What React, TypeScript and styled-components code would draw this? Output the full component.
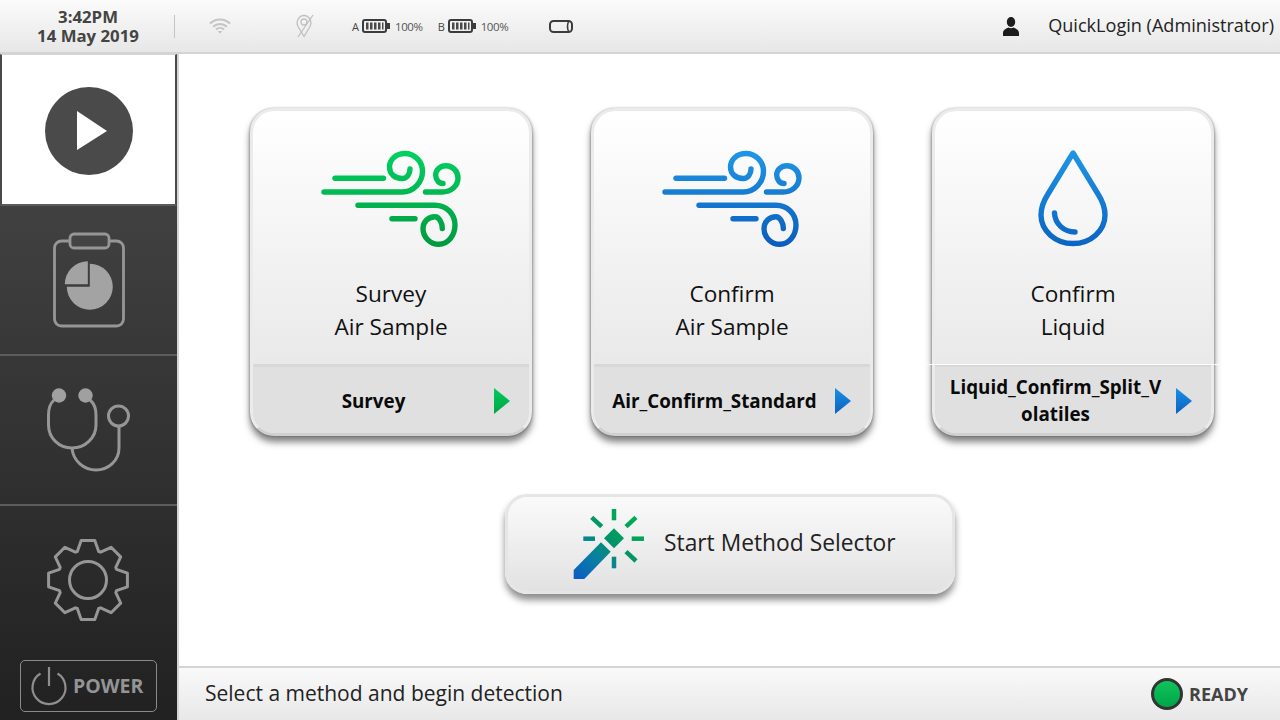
import { useMemo } from "react";
import styled, { createGlobalStyle } from "styled-components";

const GlobalStyle = createGlobalStyle`
  html, body {
    margin: 0;
    padding: 0;
    background: #ffffff;
    font-family: "Open Sans", "Noto Sans", sans-serif;
  }
  * {
    box-sizing: border-box;
  }
`;

const METHODS = [
  { id: "survey", line1: "Survey", line2: "Air Sample", method: "Survey", kind: "green" },
  { id: "confirm", line1: "Confirm", line2: "Air Sample", method: "Air_Confirm_Standard", kind: "blue" },
  { id: "liquid", line1: "Confirm", line2: "Liquid", method: "Liquid_Confirm_Split_Volatiles", kind: "drop" },
];

const WindIcon = ({ id, from, to }: { id: string; from: string; to: string }) => (
  <svg width="142" height="97" viewBox="1 0 142 97" fill="none">
    <defs>
      <linearGradient id={id} gradientUnits="userSpaceOnUse" x1="0" y1="0" x2="0" y2="97">
        <stop offset="0" stopColor={from} />
        <stop offset="1" stopColor={to} />
      </linearGradient>
    </defs>
    <g stroke={`url(#${id})`} strokeWidth="5.4" strokeLinecap="round" strokeLinejoin="round">
      <path d="M16 28.300H64.500" />
      <path d="M5 42H83C95 42 103.500 32 103.500 21C103.500 11 95 3.500 86 3.500C77 3.500 70.500 9.500 70.500 17C70.500 24 76 28.500 83 28.500C88 28.500 91 24 91 19" />
      <path d="M106.500 42H123C132 42 139 36 139 28C139 21 133.500 15.700 127 15.700C121 15.700 116.700 20 116.700 25C116.700 30 120 33.500 124 33.500" />
      <path d="M39 55.300H116C127.500 55.300 136 64 136 75C136 86 128.500 94.300 120 94.300C111 94.300 104 87 104 78.500C104 71.500 109.500 66.700 116 66.700C120 66.700 123.500 73 123.300 78.500" />
      <path d="M73 68.700H96" />
    </g>
  </svg>
);

const DropIcon = () => (
  <svg width="76" height="101" viewBox="0 0 76 101" fill="none">
    <defs>
      <linearGradient id="dropGrad" gradientUnits="userSpaceOnUse" x1="0" y1="0" x2="0" y2="101">
        <stop offset="0" stopColor="#1f97e6" />
        <stop offset="1" stopColor="#0a62c2" />
      </linearGradient>
    </defs>
    <g stroke="url(#dropGrad)" strokeWidth="5.4" strokeLinecap="round" strokeLinejoin="round">
      <path d="M38 5L13 46Q6 57 6 67A32 28.500 0 0 0 70 67Q70 57 63 46Z" />
      <path d="M19.500 65C20 76 29 84 40 84" />
    </g>
  </svg>
);

const WandIcon = () => (
  <svg width="74" height="74" viewBox="0 0 74 74" fill="none">
    <defs>
      <linearGradient id="wandGrad" gradientUnits="userSpaceOnUse" x1="70" y1="4" x2="4" y2="74">
        <stop offset="0" stopColor="#00b548" />
        <stop offset="0.45" stopColor="#009468" />
        <stop offset="0.68" stopColor="#0a80a0" />
        <stop offset="1" stopColor="#0a5ac8" />
      </linearGradient>
    </defs>
    <path d="M31 37.300L40.700 46.700L14.300 74H3.700V65Z" fill="url(#wandGrad)" />
    <path d="M44 23.300L54 33.300L44 43.300L34 33.300Z" fill="url(#wandGrad)" />
    <g stroke="url(#wandGrad)" strokeWidth="4.500">
      <path d="M44 4V15.300" />
      <path d="M61.700 33.700H74" />
      <path d="M13.300 33.700H25" />
      <path d="M44 51.700V63.300" />
      <path d="M21.700 12.300L31.700 21.700" />
      <path d="M56 21.700L66 12.300" />
      <path d="M56 46.700L66 56" />
    </g>
  </svg>
);

const PlayIcon = () => (
  <svg width="90" height="90" viewBox="0 0 90 90">
    <circle cx="45" cy="45" r="44" fill="#4a4a4a" />
    <path d="M33 25V64L63 45Z" fill="#ffffff" />
  </svg>
);

const ClipboardIcon = () => (
  <svg width="74" height="96" viewBox="0 0 74 96" fill="none">
    <rect x="2.500" y="9" width="69" height="85" rx="7" stroke="#969696" strokeWidth="2.800" />
    <rect x="18" y="2" width="39" height="14" rx="4" fill="#444444" stroke="#969696" strokeWidth="2.800" />
    <path d="M37.800 31.700A23 23 0 1 1 14.800 54.700H37.800Z" fill="#a3a3a3" />
    <path d="M35.800 29.300A23 23 0 0 0 12.800 52.300H35.800Z" fill="#a3a3a3" />
  </svg>
);

const StethoscopeIcon = () => (
  <svg width="90" height="92" viewBox="0 0 90 92" fill="none">
    <g stroke="#969696" strokeWidth="3">
      <path d="M10 12Q4.500 17 4.500 27V37C4.500 50 15 60 28 60C41 60 52 50 52 37V27Q52 17 46 12" />
      <path d="M28 60C29 73 40 82 52 82C64 82 75 73 75 60V38" />
      <circle cx="74.500" cy="28" r="10" />
    </g>
    <circle cx="15" cy="7.500" r="7.200" fill="#a0a0a0" />
    <circle cx="41.500" cy="7.500" r="7.200" fill="#a0a0a0" />
  </svg>
);

const GearIcon = () => {
  const outline = useMemo(() => {
    const points: string[] = [];
    const teeth = 8;
    for (let i = 0; i < teeth; i++) {
      const mid = (i * 2 * Math.PI) / teeth - Math.PI / 2;
      const spots: [number, number][] = [
        [30.5, mid - 0.36],
        [40, mid - 0.17],
        [40, mid + 0.17],
        [30.5, mid + 0.36],
      ];
      spots.forEach(([r, a]) => {
        points.push(`${(43 + r * Math.cos(a)).toFixed(1)},${(43 + r * Math.sin(a)).toFixed(1)}`);
      });
    }
    return points.join(" ");
  }, []);
  return (
    <svg width="86" height="86" viewBox="0 0 86 86" fill="none">
      <polygon points={outline} stroke="#969696" strokeWidth="3" strokeLinejoin="round" />
      <circle cx="43" cy="43" r="18.500" stroke="#969696" strokeWidth="3" />
    </svg>
  );
};

const PowerIcon = () => (
  <svg width="38" height="40" viewBox="0 0 38 40" fill="none" stroke="#8e8e8e" strokeWidth="2.200">
    <path d="M19 1V20" />
    <path d="M10.500 7.500A16.500 16.500 0 1 0 27.500 7.500" />
  </svg>
);

const WifiIcon = () => (
  <svg width="22" height="16" viewBox="0 0 22 16" fill="none" stroke="#c4c4c4" strokeWidth="2">
    <path d="M1 5.500C6.500 0 15.500 0 21 5.500" />
    <path d="M4 8.700C8 5 14 5 18 8.700" />
    <path d="M7 11.500C9.300 9.500 12.700 9.500 15 11.500" />
    <path d="M8.700 13H13.300L11 15.800Z" fill="#c4c4c4" stroke="none" />
  </svg>
);

const PinIcon = () => (
  <svg width="18" height="24" viewBox="0 0 18 24" fill="none" stroke="#c0c0c0" strokeWidth="1.300">
    <path d="M8 22.500L2 12.500C-0.500 7.500 3 1.500 8 1.500C13 1.500 16.500 7.500 14 12.500Z" />
    <circle cx="8" cy="8" r="3" />
    <path d="M2 23L17 1" />
  </svg>
);

const BatteryIcon = () => (
  <svg width="28" height="14" viewBox="0 0 28 14">
    <rect x="1" y="1" width="23" height="12" rx="2" fill="none" stroke="#3c3c3c" strokeWidth="2" />
    <rect x="25" y="4" width="3" height="6" fill="#3c3c3c" />
    {[4, 8, 12, 16].map((x) => (
      <rect key={x} x={x} y="3.500" width="2.500" height="7" fill="#4a4a4a" />
    ))}
    <rect x="20" y="3.500" width="1.500" height="7" fill="#4a4a4a" />
  </svg>
);

const PillIcon = () => (
  <svg width="24" height="13" viewBox="0 0 24 13" fill="none" stroke="#3c3c3c">
    <rect x="1" y="1" width="22" height="11" rx="3.500" strokeWidth="2" />
    <path d="M19.500 1.500Q17.500 6.500 19.500 11.500" strokeWidth="1.500" />
  </svg>
);

const UserIcon = () => (
  <svg width="16" height="19" viewBox="0 0 16 19" fill="#1c1c1c">
    <ellipse cx="8" cy="5" rx="4.200" ry="5" />
    <path d="M0 19V16C0 13 3 11.500 5.500 10.500C7 11.500 9 11.500 10.500 10.500C13 11.500 16 13 16 16V19Z" />
  </svg>
);

const App = () => {
  return (
    <Screen>
      <GlobalStyle />
      <TopBar>
        <Clock>
          <span>3:42PM</span>
          <span>14 May 2019</span>
        </Clock>
        <TopDivider />
        <WifiSlot>
          <WifiIcon />
        </WifiSlot>
        <PinSlot>
          <PinIcon />
        </PinSlot>
        <BatteryGroup>
          <BatteryLetter>A</BatteryLetter>
          <BatteryIcon />
          <BatteryLevel>100%</BatteryLevel>
        </BatteryGroup>
        <BatteryGroup $second>
          <BatteryLetter>B</BatteryLetter>
          <BatteryIcon />
          <BatteryLevel>100%</BatteryLevel>
        </BatteryGroup>
        <PillSlot>
          <PillIcon />
        </PillSlot>
        <UserArea>
          <UserIcon />
          <UserName>QuickLogin (Administrator)</UserName>
        </UserArea>
      </TopBar>
      <Body>
        <Sidebar>
          <ActiveNavItem>
            <PlayIcon />
          </ActiveNavItem>
          <NavItem>
            <ClipboardIcon />
          </NavItem>
          <StethoscopeItem>
            <StethoscopeIcon />
          </StethoscopeItem>
          <GearItem>
            <GearIcon />
          </GearItem>
          <PowerButton>
            <PowerIcon />
            <PowerLabel>POWER</PowerLabel>
          </PowerButton>
        </Sidebar>
        <Main>
          <Content>
            <CardRow>
              {METHODS.map((m) => (
                <Card key={m.id} $glint={m.kind === "drop"}>
                  <CardTop>
                    <IconSlot>
                      {m.kind === "drop" ? (
                        <DropIcon />
                      ) : m.kind === "green" ? (
                        <WindIcon id="windGreen" from="#00d162" to="#009a3e" />
                      ) : (
                        <WindIcon id="windBlue" from="#1f97e6" to="#0a5cbc" />
                      )}
                    </IconSlot>
                    <CardTitle>
                      <span>{m.line1}</span>
                      <span>{m.line2}</span>
                    </CardTitle>
                  </CardTop>
                  <CardFooter>
                    <MethodName>{m.method}</MethodName>
                    <Arrow $green={m.kind === "green"} />
                  </CardFooter>
                </Card>
              ))}
            </CardRow>
            <SelectorButton>
              <WandIcon />
              <SelectorLabel>Start Method Selector</SelectorLabel>
            </SelectorButton>
          </Content>
          <StatusBar>
            <StatusText>Select a method and begin detection</StatusText>
            <ReadyArea>
              <ReadyLed />
              <ReadyLabel>READY</ReadyLabel>
            </ReadyArea>
          </StatusBar>
        </Main>
      </Body>
    </Screen>
  );
};

const Screen = styled.div`
  width: 1280px;
  height: 720px;
  display: flex;
  flex-direction: column;
  overflow: hidden;
  background: #ffffff;
`;

const TopBar = styled.header`
  height: 54px;
  flex: none;
  display: flex;
  align-items: center;
  background: linear-gradient(#fbfbfb, #e7e7e7);
  border-bottom: 2px solid #d4d4d4;
`;

const Clock = styled.div`
  width: 176px;
  display: flex;
  flex-direction: column;
  align-items: center;
  font-size: 16.800px;
  font-weight: 700;
  line-height: 19px;
  color: #444444;
`;

const TopDivider = styled.div`
  width: 1px;
  height: 23px;
  margin-left: -2px;
  background: #c4c4c4;
`;

const WifiSlot = styled.div`
  display: flex;
  margin-left: 34px;
`;

const PinSlot = styled.div`
  display: flex;
  margin-left: 65px;
`;

const BatteryGroup = styled.div<{ $second?: boolean }>`
  display: flex;
  align-items: center;
  margin-left: ${(p) => (p.$second ? "15px" : "38px")};
`;

const BatteryLetter = styled.span`
  font-size: 11px;
  color: #444444;
  width: 10px;
`;

const BatteryLevel = styled.span`
  font-size: 11.500px;
  letter-spacing: -0.4px;
  color: #555555;
  margin-left: 5px;
`;

const PillSlot = styled.div`
  display: flex;
  margin-left: 41px;
`;

const UserArea = styled.div`
  margin-left: auto;
  margin-right: 6px;
  display: flex;
  align-items: center;
  gap: 29px;
`;

const UserName = styled.span`
  font-size: 18.100px;
  margin-bottom: 2px;
  color: #222222;
`;

const Body = styled.div`
  flex: 1;
  display: flex;
  min-height: 0;
`;

const Sidebar = styled.nav`
  width: 179px;
  flex: none;
  display: flex;
  flex-direction: column;
  align-items: stretch;
  background: linear-gradient(#4a4a4a, #212121);
  border-right: 2px solid #d4d4d4;
`;

const NavItem = styled.button`
  height: 150px;
  flex: none;
  padding: 0;
  display: flex;
  align-items: center;
  justify-content: center;
  background: transparent;
  border: 0;
  border-bottom: 2px solid #5c5c5c;
`;

const ActiveNavItem = styled(NavItem)`
  height: 152px;
  margin: 0;
  padding-top: 2px;
  background: #ffffff;
  border-top: 1px solid #d4d4d4;
  border-left: 2px solid #4a4a4a;
  border-right: 2px solid #4a4a4a;
`;

const StethoscopeItem = styled(NavItem)`
  padding-top: 8px;
`;

const GearItem = styled(NavItem)`
  height: 149px;
  padding: 0 2px 2px 0;
  border-bottom: 0;
`;

const PowerButton = styled.button`
  width: 137px;
  height: 52px;
  margin: auto 0 8px 20px;
  padding: 0 0 0 9px;
  display: flex;
  align-items: center;
  gap: 5px;
  background: transparent;
  border: 1.500px solid #8a8a8a;
  border-radius: 5px;
`;

const PowerLabel = styled.span`
  font-family: "Open Sans", sans-serif;
  font-size: 19.500px;
  font-weight: 700;
  margin-bottom: 2px;
  color: #949494;
`;

const Main = styled.main`
  flex: 1;
  display: flex;
  flex-direction: column;
  min-width: 0;
`;

const Content = styled.div`
  flex: 1;
  display: flex;
  flex-direction: column;
  align-items: flex-start;
  padding: 54px 0 0 71px;
`;

const CardRow = styled.div`
  display: flex;
  gap: 59px;
`;

const Card = styled.article<{ $glint?: boolean }>`
  position: relative;
  width: 282px;
  height: 328px;
  display: flex;
  flex-direction: column;
  border: 3px solid #ebebeb;
  border-bottom-color: #d0d0d0;
  border-radius: 24px;
  box-shadow: 0 6px 7px rgba(0, 0, 0, 0.5), -1px 0 2px rgba(0, 0, 0, 0.18), 1px 0 2px rgba(0, 0, 0, 0.18);
  background: #e0e0e0;

  ${(p) =>
    p.$glint &&
    `
    &::after {
      content: "";
      position: absolute;
      top: 253px;
      left: -8px;
      right: -8px;
      height: 1px;
      background: #ffffff;
    }
  `}
`;

const CardTop = styled.div`
  height: 256px;
  flex: none;
  display: flex;
  flex-direction: column;
  align-items: center;
  padding-top: 39px;
  background: linear-gradient(#ffffff, #e9e9e9);
  border-bottom: 3px solid #d8d8d8;
  border-radius: 21px 21px 0 0;
`;

const IconSlot = styled.div`
  height: 97px;
  display: flex;
  align-items: center;
  justify-content: center;
`;

const CardTitle = styled.h2`
  margin: 30px 0 0;
  display: flex;
  flex-direction: column;
  align-items: center;
  font-size: 22.600px;
  font-weight: 400;
  line-height: 33px;
  color: #111111;
`;

const CardFooter = styled.div`
  flex: 1;
  display: flex;
  align-items: center;
  padding: 2px 19px 0 0;
  background: #e0e0e0;
  border-radius: 0 0 21px 21px;
`;

const MethodName = styled.div`
  flex: 1;
  min-width: 0;
  padding: 0 12px;
  text-align: center;
  word-break: break-all;
  font-size: 18.800px;
  font-weight: 700;
  line-height: 27px;
  color: #0a0a0a;
`;

const Arrow = styled.div<{ $green?: boolean }>`
  width: 16px;
  height: 26px;
  flex: none;
  clip-path: polygon(0 0, 100% 50%, 0 100%);
  background: ${(p) =>
    p.$green ? "linear-gradient(#00cc5c, #00a646)" : "linear-gradient(#1b8fe4, #0a62c0)"};
`;

const SelectorButton = styled.button`
  width: 450px;
  height: 100px;
  margin: 58px 0 0 255px;
  padding: 0 0 0 62px;
  display: flex;
  align-items: center;
  gap: 20px;
  font-family: inherit;
  background: linear-gradient(#fafafa, #e3e2e3);
  border: 3px solid #e6e6e6;
  border-radius: 22px;
  box-shadow: 0 6px 7px rgba(0, 0, 0, 0.45);

  svg {
    margin-bottom: 4px;
  }
`;

const SelectorLabel = styled.span`
  font-size: 22.800px;
  margin-bottom: 4px;
  color: #222222;
`;

const StatusBar = styled.footer`
  height: 54px;
  flex: none;
  display: flex;
  align-items: center;
  justify-content: space-between;
  padding: 0 32px 0 26px;
  background: linear-gradient(#f9f9f9, #e8e8e8);
  border-top: 2px solid #d4d4d4;
`;

const StatusText = styled.span`
  font-size: 21px;
  margin-bottom: 2px;
  color: #222222;
`;

const ReadyArea = styled.div`
  display: flex;
  align-items: center;
  gap: 6px;
`;

const ReadyLed = styled.div`
  width: 32px;
  height: 32px;
  border-radius: 50%;
  border: 3px solid #333333;
  background: linear-gradient(#10c45c, #00a548);
`;

const ReadyLabel = styled.span`
  font-size: 18px;
  font-weight: 700;
  color: #444444;
`;

export default App;
